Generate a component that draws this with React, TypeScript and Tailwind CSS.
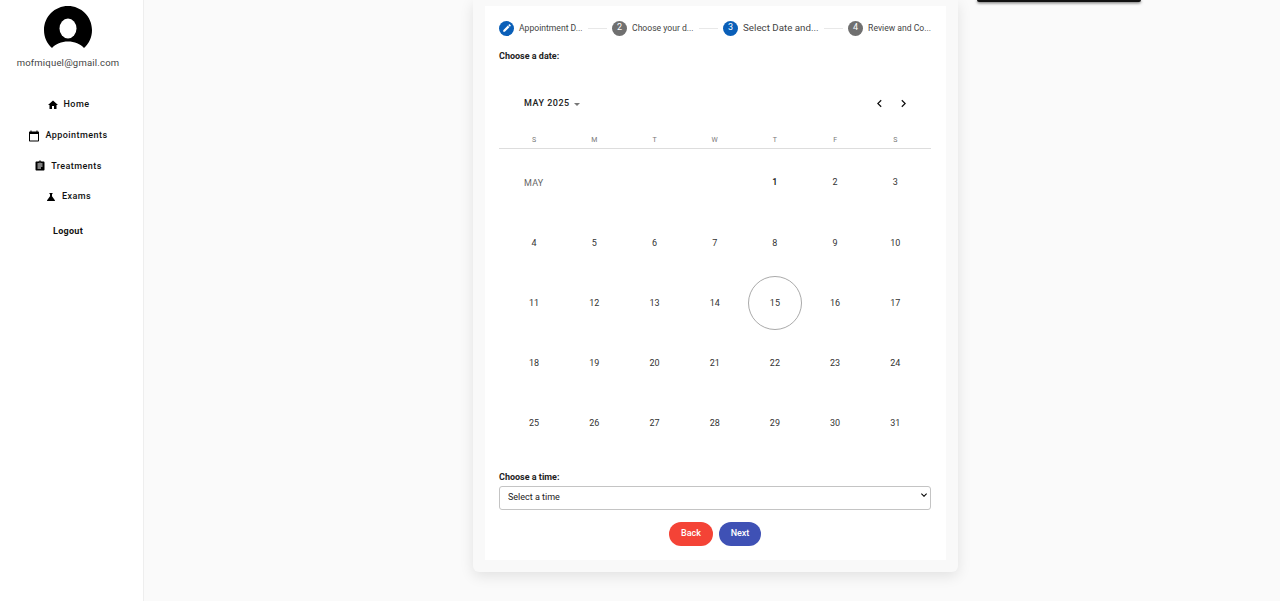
import { MdAssignment, MdCalendarToday, MdChevronLeft, MdChevronRight, MdEdit, MdHome, MdKeyboardArrowDown, MdScience } from 'react-icons/md';

const navItems = [
  { label: 'Home', Icon: MdHome },
  { label: 'Appointments', Icon: MdCalendarToday },
  { label: 'Treatments', Icon: MdAssignment },
  { label: 'Exams', Icon: MdScience }
];

const weekDays = ['S', 'M', 'T', 'W', 'T', 'F', 'S'];
const days = Array.from({ length: 31 }, (_, i) => i + 1);

const Avatar = () => (
  <svg viewBox="0 0 48 48" className="w-12 h-12 block">
    <path
      d="M24 0C10.700 0 0 10.700 0 24c0 7.200 2.900 13.400 8 18 3.500-4 9.500-6.500 16-6.500s12.500 2.500 16 6.500c5.100-4.600 8-10.800 8-18C48 10.700 37.300 0 24 0z"
      fill="#000"
    />
    <ellipse cx="24" cy="22.500" rx="8.500" ry="10" fill="#fff" />
  </svg>
);

const Sidebar = () => (
  <aside className="w-[144px] shrink-0 bg-white border-r border-[#eeeeee] flex flex-col items-center pt-[6px] pr-[7px]">
    <Avatar />
    <p className="mt-[2px] text-[9.500px] leading-[13px] tracking-[0.2px] text-[#444]">mofmiquel@gmail.com</p>
    <nav className="mt-[27px] flex flex-col items-center gap-[12.670px]">
      {navItems.map(({ label, Icon }) => (
        <div key={label} className="h-[18px] flex items-center gap-[5px]">
          <Icon className="w-[12px] h-[12px] text-black" />
          <span className="text-[9px] font-medium tracking-[0.45px] text-[#111]">{label}</span>
        </div>
      ))}
    </nav>
    <span className="mt-[19px] text-[9px] leading-[12px] font-bold tracking-[0.3px] text-[#111]">Logout</span>
  </aside>
);

const Step = ({ n, label, active, edit, large }: { n: number; label: string; active?: boolean; edit?: boolean; large?: boolean }) => (
  <div className="flex items-center shrink-0">
    <span
      className={`w-[15px] h-[15px] rounded-full flex items-center justify-center text-white text-[9px] ${
        active ? 'bg-[#0a5fb8]' : 'bg-[#707070]'
      }`}
    >
      {edit ? <MdEdit className="w-[10px] h-[10px]" /> : n}
    </span>
    <span className={`ml-[5px] text-[#444] whitespace-nowrap ${large ? 'text-[9.750px]' : 'text-[8.600px]'}`}>{label}</span>
  </div>
);

const StepLine = () => <div className="flex-1 h-px bg-[#e8e8e8] mx-[5px]" />;

const Calendar = () => (
  <div>
    <div className="flex items-center h-[24px] mt-[29px] pl-[25px] pr-[20px]">
      <span className="pt-px text-[9px] font-medium tracking-[0.5px] text-[#222]">MAY 2025</span>
      <span className="ml-[4px] mt-[2px] w-0 h-0 border-x-[3px] border-x-transparent border-t-[3px] border-t-[#777]" />
      <div className="ml-auto flex items-center gap-[9px]">
        <MdChevronLeft className="w-[15px] h-[15px] text-[#111]" />
        <MdChevronRight className="w-[15px] h-[15px] text-[#111]" />
      </div>
    </div>
    <div className="mt-[20px] pb-[3px] border-b border-[#dddddd] pl-[5px] pr-[5.600px] grid grid-cols-7">
      {weekDays.map((d, i) => (
        <span key={i} className="text-center text-[7px] leading-[10px] text-[#777]">
          {d}
        </span>
      ))}
    </div>
    <div className="mt-[4px] pl-[5px] pr-[5.600px] grid grid-cols-7 auto-rows-[60.200px] text-[9px] text-[#333]">
      <span className="col-span-4 flex items-center pl-[20px] pt-px text-[9px] tracking-[0.2px] text-[#666]">MAY</span>
      {days.map(d => (
        <div key={d} className="flex items-center justify-center">
          <span
            className={`flex items-center justify-center ${
              d === 15 ? 'w-[54px] h-[54px] rounded-full border border-[#aaaaaa]' : ''
            } ${d === 1 ? 'font-medium text-[#111]' : ''}`}
          >
            {d}
          </span>
        </div>
      ))}
    </div>
  </div>
);

export default function App() {
  return (
    <div className="min-h-[601px] h-[601px] overflow-hidden flex bg-[#fafafa] font-['Roboto',sans-serif]">
      <Sidebar />
      <main className="flex-1 flex items-start pl-[329px] relative">
        <div className="w-[485px] h-[572px] bg-[#f9f9f9] rounded-b-[6px] shadow-[0_4px_14px_rgba(0,0,0,0.1)] pt-[6px] px-[12px]">
          <div className="w-[461px] h-[554px] bg-white pl-[14px] pr-[15px] pt-[14px]">
            <div className="flex items-center h-[16px]">
              <Step n={1} label="Appointment D..." active edit />
              <StepLine />
              <Step n={2} label="Choose your d..." />
              <StepLine />
              <Step n={3} label="Select Date and..." active large />
              <StepLine />
              <Step n={4} label="Review and Co..." />
            </div>
            <p className="mt-[14px] text-[9px] leading-[12px] font-bold text-[#222]">Choose a date:</p>
            <Calendar />
            <p className="mt-[17px] text-[9px] leading-[12px] font-bold text-[#222]">Choose a time:</p>
            <div className="relative">
              <select className="appearance-none w-full h-[24px] bg-white border border-[#c4c4c4] rounded-[3px] pl-[8px] text-[9px] text-[#222] outline-none">
                <option>Select a time</option>
              </select>
              <MdKeyboardArrowDown className="absolute right-[1px] top-[6px] w-[12px] h-[12px] text-black pointer-events-none" />
            </div>
            <div className="mt-[12px] flex justify-center gap-[6px]">
              <button className="w-[44px] h-[24px] rounded-full bg-[#f44336] text-white text-[9px] font-medium">Back</button>
              <button className="w-[42px] h-[24px] rounded-full bg-[#3f51b5] text-white text-[9px] font-medium">Next</button>
            </div>
          </div>
        </div>
        {/* bottom edge of a popup scrolled out of view */}
        <div className="absolute left-[833px] top-0 w-[164px] h-[1.500px] bg-[#111] rounded-b-[2px] shadow-[0_1px_3px_rgba(0,0,0,0.7)]" />
      </main>
    </div>
  );
}
